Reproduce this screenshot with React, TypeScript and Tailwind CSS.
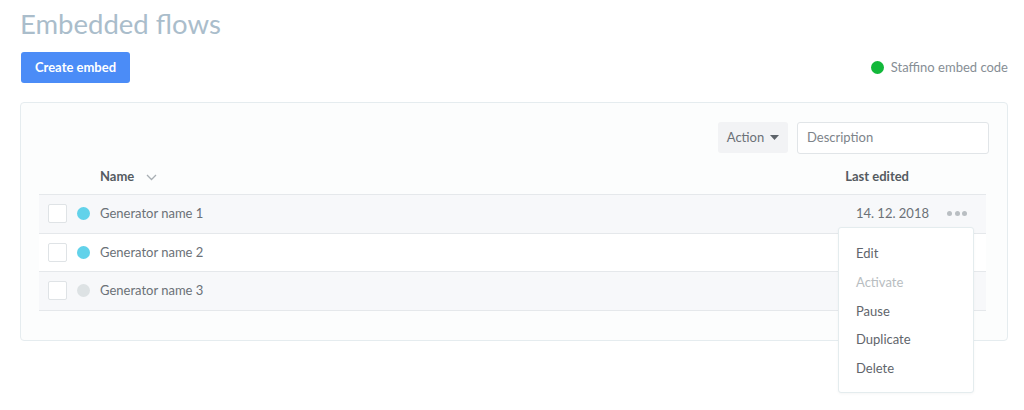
import React from "react";

const rows = [
  { name: "Generator name 1", dot: "bg-[#62d2ea]", date: "14. 12. 2018", bg: "bg-[#f7f8fa]" },
  { name: "Generator name 2", dot: "bg-[#62d2ea]", date: "", bg: "bg-white" },
  { name: "Generator name 3", dot: "bg-[#dde2e4]", date: "", bg: "bg-[#f7f8fa]" },
];

export default function App() {
  return (
    <div className="relative w-[1024px] h-[410px] bg-white font-['Lato',sans-serif] text-[#6b7177]">
      <div className="px-5 pt-[7px]">
        <h1 className="text-[27.5px] leading-[34px] text-[#aabdcb] font-normal">Embedded flows</h1>
        <div className="mt-[11px] flex items-center justify-between -mr-[4px]">
          <button className="ml-[1px] h-[31px] w-[109px] rounded-[3px] bg-[#4b8cf7] text-[13px] font-bold text-white">
            Create embed
          </button>
          <div className="flex items-center gap-[7px] text-[13px] text-[#868e95]">
            <span className="h-[13px] w-[13px] rounded-full bg-[#12b83a]" />
            Staffino embed code
          </div>
        </div>
        <div className="mt-[19px] w-[988px] h-[239px] rounded-[4px] border border-[#e5ecef] bg-[#fcfdfd] pl-[18px] pr-[21px] pt-[19px]">
          <div className="flex justify-end gap-[9px] -mr-[3px]">
            <button className="flex h-[31px] w-[70px] items-center justify-center gap-[6px] rounded-[3px] bg-[#f2f3f5] text-[13px] text-[#6b7177]">
              Action
              <svg width="9" height="5" viewBox="0 0 9 5"><path d="M0 0h9L4.5 5z" fill="#5d6369" /></svg>
            </button>
            <div className="flex h-[32px] w-[192px] items-center rounded-[3px] border border-[#e1e5e8] bg-white px-[9px] text-[13px] text-[#7d848a]">
              Description
            </div>
          </div>
          <div className="mt-[6px] flex h-[35px] items-center border-b border-[#e5e8eb] pl-[61px] pr-[77px] text-[13px] font-bold text-[#555b61]">
            <span>Name</span>
            <svg className="ml-[12px]" width="11" height="7" viewBox="0 0 11 7"><path d="M1 1l4.5 4.5L10 1" stroke="#a8aeb3" strokeWidth="1.3" fill="none" /></svg>
            <span className="ml-auto">Last edited</span>
          </div>
          {rows.map((r) => (
            <div key={r.name} className={`flex h-[38.5px] items-center border-b border-[#e5e8eb] ${r.bg} pl-[9px] pr-[19px] text-[13px]`}>
              <span className="h-[19px] w-[19px] rounded-[2px] border border-[#dfe3e6] bg-white" />
              <span className={`ml-[10px] h-[13px] w-[13px] rounded-full ${r.dot}`} />
              <span className="ml-[10px]">{r.name}</span>
              {r.date && (
                <>
                  <span className="ml-auto">{r.date}</span>
                  <span className="ml-[18px] flex gap-[2.5px]">
                    <span className="h-[5px] w-[5px] rounded-full bg-[#b9bec2]" />
                    <span className="h-[5px] w-[5px] rounded-full bg-[#b9bec2]" />
                    <span className="h-[5px] w-[5px] rounded-full bg-[#b9bec2]" />
                  </span>
                </>
              )}
            </div>
          ))}
        </div>
      </div>
      <div className="absolute left-[838px] top-[227px] w-[136px] h-[166px] rounded-[3px] border border-[#e4ecee] bg-white pl-[17px] pt-[14px] text-[13px] text-[#5f656b] shadow-[0_1px_3px_rgba(0,0,0,0.04)]">
        <div className="h-[28.75px] leading-[23px]">Edit</div>
        <div className="h-[28.75px] leading-[23px] text-[#b8bdc1]">Activate</div>
        <div className="h-[28.75px] leading-[23px]">Pause</div>
        <div className="h-[28.75px] leading-[23px]">Duplicate</div>
        <div className="h-[28.75px] leading-[23px]">Delete</div>
      </div>
    </div>
  );
}
